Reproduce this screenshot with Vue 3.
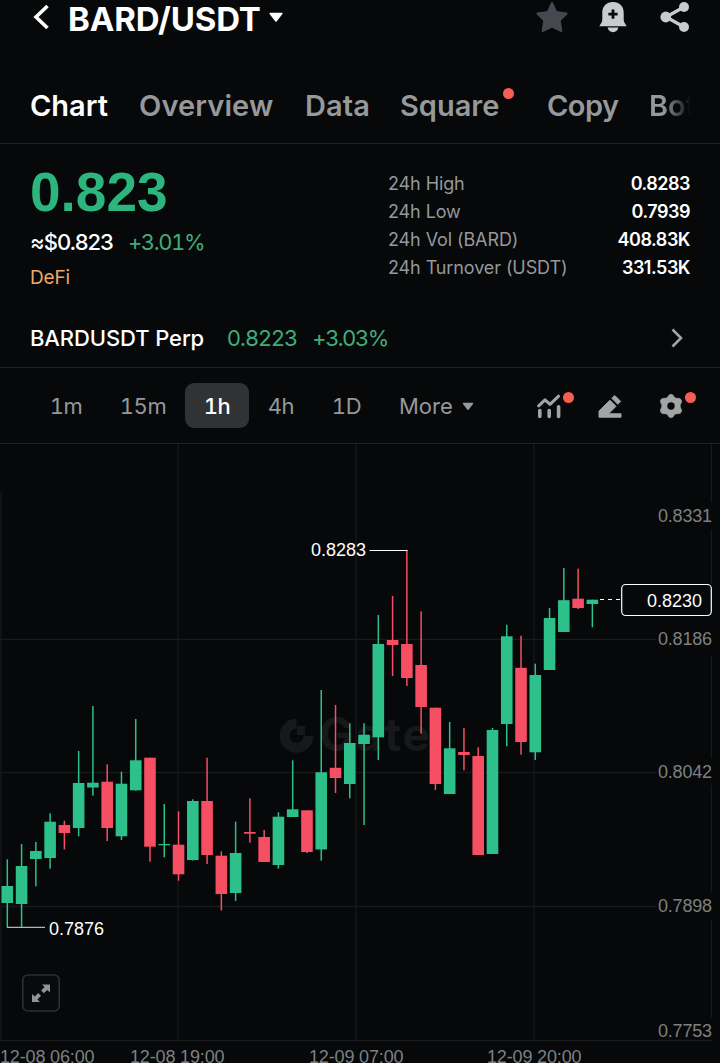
<template>
  <div class="market-page">
    <!-- header -->
    <header class="header">
      <svg class="back" width="18" height="28" viewBox="0 0 18 28">
        <path d="M15.5 3 L4 14 L15.5 25" fill="none" stroke="#fff" stroke-width="3.6" />
      </svg>
      <div class="pair">BARD/USDT</div>
      <svg class="pair-arrow" width="16" height="12" viewBox="0 0 16 12">
        <path d="M2.2 1.6 H13.8 L8 9 Z" fill="#fff" stroke="#fff" stroke-width="1.6" stroke-linejoin="round" />
      </svg>
      <div class="header-icons">
        <svg width="34" height="34" viewBox="0 0 34 34">
          <path
            d="M17 3 L21.3 12.1 L31.6 13.5 L24.7 20.5 L26.3 31 L17 26.6 L7.7 31 L9.3 20.5 L2.4 13.5 L12.7 12.1 Z"
            fill="#464850" stroke="#464850" stroke-width="2" stroke-linejoin="round"
          />
        </svg>
        <svg width="30" height="34" viewBox="0 0 30 34">
          <path
            d="M15 2 C21.6 2 25.7 6.4 25.7 12.4 V19.5 C25.7 22 27 23.4 28.7 26.2 H1.3 C3 23.4 4.3 22 4.3 19.5 V12.4 C4.3 6.4 8.4 2 15 2 Z"
            fill="#c9cccd"
          />
          <path d="M9.6 27.6 H20.4 C19.8 30.8 17.6 32.2 15 32.2 C12.4 32.2 10.2 30.8 9.6 27.6 Z" fill="#c9cccd" />
          <path d="M15 9.5 V18.7 M10.4 14.1 H19.6" stroke="#060809" stroke-width="2.8" />
        </svg>
        <svg width="30" height="34" viewBox="0 0 30 34">
          <path d="M24 7 L6 17 L24 27" fill="none" stroke="#c9cccd" stroke-width="3.2" />
          <circle cx="24" cy="7" r="5" fill="#c9cccd" />
          <circle cx="5.8" cy="17" r="5.4" fill="#c9cccd" />
          <circle cx="24" cy="27" r="5" fill="#c9cccd" />
        </svg>
      </div>
    </header>

    <!-- page tabs -->
    <div class="tabs-wrap">
      <nav class="tabs">
        <div
          v-for="tab in tabs"
          :key="tab.name"
          class="tab"
          :class="[tab.key, { active: activeTab === tab.key }]"
          @click="activeTab = tab.key"
        >
          {{ tab.name }}
          <i v-if="tab.dot" class="dot"></i>
        </div>
      </nav>
    </div>

    <!-- price summary -->
    <section class="summary">
      <div class="price-box">
        <div class="price">0.823</div>
        <div class="sub-price">
          <span class="fiat">≈$0.823</span>
          <span class="change">+3.01%</span>
        </div>
        <div class="tag">DeFi</div>
      </div>
      <div class="stats">
        <div v-for="item in stats" :key="item.label" class="stat">
          <span class="stat-label">{{ item.label }}</span>
          <span class="stat-value">{{ item.value }}</span>
        </div>
      </div>
    </section>

    <section class="perp">
      <span class="perp-name">BARDUSDT Perp</span>
      <span class="perp-price">0.8223</span>
      <span class="perp-change">+3.03%</span>
      <svg class="perp-arrow" width="14" height="20" viewBox="0 0 14 20">
        <path d="M2.5 1.5 L11 10 L2.5 18.5" fill="none" stroke="#a2a4a5" stroke-width="2.6" />
      </svg>
    </section>

    <!-- interval toolbar -->
    <section class="toolbar">
      <div class="intervals">
        <div
          v-for="item in intervals"
          :key="item"
          class="interval"
          :class="{ active: activeInterval === item }"
          @click="activeInterval = item"
        >
          {{ item }}
        </div>
      </div>
      <div class="more">
        More
        <svg width="12" height="9" viewBox="0 0 12 9">
          <path d="M1.5 1.5 H10.5 L6 7.2 Z" fill="#96989a" stroke="#96989a" stroke-width="1.4" stroke-linejoin="round" />
        </svg>
      </div>
      <div class="tools">
        <div class="tool">
          <svg width="26" height="26" viewBox="0 0 26 26">
            <path d="M2.6 12.8 L9 6.8 L14 11.4 L22.6 3.2" fill="none" stroke="#a2a4a6" stroke-width="3" stroke-linecap="round" stroke-linejoin="round" />
            <path d="M3.8 17.6 V23.4 M13.2 17.6 V23.4 M22.6 13.8 V23.4" stroke="#a2a4a6" stroke-width="3.6" stroke-linecap="round" />
          </svg>
          <i class="dot"></i>
        </div>
        <div class="tool">
          <svg width="26" height="26" viewBox="0 0 26 26">
            <path d="M12.9 7.2 L19 13.3 L11.6 20.8 H24 V24.2 H2 V18.1 Z" fill="#a2a4a6" stroke="#a2a4a6" stroke-width="1" stroke-linejoin="round" />
            <path d="M14.8 5.3 L17.8 2.5 L23.6 8.3 L20.8 11.3 Z" fill="#a2a4a6" stroke="#a2a4a6" stroke-width="1" stroke-linejoin="round" />
          </svg>
        </div>
        <div class="tool">
          <svg width="26" height="26" viewBox="0 0 26 26">
            <path
              d="M13 1.2 Q15.3 1.2 16.2 4 Q17.6 5.6 20 5.3 Q22.6 5 23.4 7.2 Q24.2 9.2 22.6 11 Q21.6 13 22.6 15 Q24.2 16.8 23.4 18.8 Q22.6 21 20 20.7 Q17.6 20.4 16.2 22 Q15.3 24.8 13 24.8 Q10.7 24.8 9.8 22 Q8.4 20.4 6 20.7 Q3.4 21 2.6 18.8 Q1.8 16.8 3.4 15 Q4.4 13 3.4 11 Q1.8 9.2 2.6 7.2 Q3.4 5 6 5.3 Q8.4 5.6 9.8 4 Q10.7 1.2 13 1.2 Z"
              fill="#a2a4a6" stroke="#a2a4a6" stroke-width="0.6"
            />
            <circle cx="13" cy="13" r="3.7" fill="#060809" />
          </svg>
          <i class="dot"></i>
        </div>
      </div>
    </section>

    <!-- candlestick chart -->
    <section class="chart">
      <svg width="720" height="619" viewBox="0 444 720 619">
        <g class="grid">
          <path v-for="x in [1, 178, 356, 534]" :key="'x' + x" :d="`M${x} ${x === 1 ? 492 : 444} V1040`" />
          <path v-for="y in [639.5, 772.5, 906.5]" :key="'y' + y" :d="`M0 ${y} H656`" />
          <path d="M0 1040.5 H712" />
          <path d="M711.5 444 V502 M711.5 530 V584 M711.5 656 V758 M711.5 785 V892 M711.5 920 V1018" />
        </g>

        <g class="watermark">
          <path d="M296.5 723.8 A12 12 0 1 0 308.5 736" fill="none" stroke="#16181a" stroke-width="10" />
          <path d="M297 726 H305 V735 H297 Z" fill="#16181a" />
          <text x="319" y="751" textLength="111">Gate</text>
        </g>

        <g v-for="(c, i) in candles" :key="i" :class="c[0]">
          <rect :x="centerX(i) - 0.75" :y="c[1]" width="1.5" :height="c[4] - c[1]" />
          <rect :x="centerX(i) - 5.8" :y="c[2]" width="11.6" :height="c[3] - c[2]" />
        </g>

        <!-- high / low marks -->
        <path d="M369.5 550.5 H407.5" stroke="#fff" stroke-width="1.2" />
        <text class="mark" x="311" y="556" textLength="55">0.8283</text>
        <path d="M7 927.3 H45" stroke="#b4b6b6" stroke-width="1.2" />
        <text class="mark" x="49" y="935" textLength="55">0.7876</text>

        <!-- last price -->
        <path d="M600 599.5 H621" stroke="#fff" stroke-width="1.2" stroke-dasharray="4 4" />
        <rect x="621.7" y="584.5" width="89.6" height="31" rx="4" fill="#060809" stroke="#fff" stroke-width="1.2" />
        <text class="mark" x="647" y="607" textLength="55">0.8230</text>

        <text
          v-for="p in priceLabels"
          :key="p.text"
          class="axis"
          x="658"
          :y="p.y"
          textLength="54"
        >{{ p.text }}</text>
        <text
          v-for="t in timeLabels"
          :key="t.text"
          class="axis"
          :x="t.x"
          y="1063"
          textLength="94.5"
        >{{ t.text }}</text>

        <g class="expand">
          <rect x="22.8" y="975" width="36.4" height="36" rx="5" fill="#080a0b" stroke="#2d2f30" stroke-width="1.6" />
          <path
            d="M42 984.5 H50 V992.5 L47.4 989.9 L43.8 993.2 L41.2 990.6 L44.6 987.1 Z M32 994 L34.7 996.5 L38.2 993 L41 995.8 L37.4 999.4 L40 1002 H32 Z"
            fill="#929495"
          />
        </g>
      </svg>
    </section>
  </div>
</template>

<script setup>
import { ref } from 'vue';

const activeTab = ref('chart');
const activeInterval = ref('1h');

const tabs = [
  { key: 'chart', name: 'Chart' },
  { key: 'overview', name: 'Overview' },
  { key: 'data', name: 'Data' },
  { key: 'square', name: 'Square', dot: true },
  { key: 'copy', name: 'Copy' },
  { key: 'bots', name: 'Bots' },
];

const stats = [
  { label: '24h High', value: '0.8283' },
  { label: '24h Low', value: '0.7939' },
  { label: '24h Vol (BARD)', value: '408.83K' },
  { label: '24h Turnover (USDT)', value: '331.53K' },
];

const intervals = ['1m', '15m', '1h', '4h', '1D'];

// direction, high, body top, body bottom, low
const candles = [
  ['up', 859.3, 886, 903, 927.3],
  ['up', 844, 866, 904, 927],
  ['up', 842, 851, 859, 886.3],
  ['up', 813.3, 821.7, 858, 868.7],
  ['down', 820.7, 825, 833, 849.5],
  ['up', 751, 783, 828, 836.3],
  ['up', 706, 782.7, 787.5, 795.7],
  ['down', 764.3, 781.7, 828, 841],
  ['up', 771.7, 783.7, 836.3, 840],
  ['up', 719, 760.3, 790.3, 790.8],
  ['down', 757.7, 757.7, 846.7, 861.7],
  ['up', 804, 844, 845.3, 857.3],
  ['down', 811.3, 844.7, 874.3, 880.7],
  ['up', 799.3, 801, 860, 860.5],
  ['down', 757.7, 801, 855, 864],
  ['down', 851.3, 855.7, 894, 910.5],
  ['up', 821.7, 853, 893, 901],
  ['down', 798.3, 832, 833.7, 842.7],
  ['down', 830, 837, 862, 862],
  ['up', 812.3, 816.7, 865, 868.7],
  ['up', 760.3, 809.3, 817, 817],
  ['down', 810.3, 810.3, 852, 853],
  ['up', 690, 772.3, 849.5, 860.7],
  ['down', 705, 767.8, 778, 793],
  ['up', 723.3, 743, 784, 798.3],
  ['up', 723.3, 734.7, 744, 825],
  ['up', 615, 644, 737.3, 760],
  ['down', 596, 640, 645, 676],
  ['down', 550, 644, 678, 686],
  ['down', 611.3, 665, 707, 733.7],
  ['down', 707.7, 707.7, 784, 790],
  ['up', 722, 748.3, 794, 794],
  ['down', 728, 752, 755, 770.3],
  ['down', 747.3, 756, 855, 855],
  ['up', 728, 730, 854, 854],
  ['up', 624.7, 636.3, 724, 746.3],
  ['down', 635.7, 667.8, 742, 754.7],
  ['up', 663.7, 675, 752.3, 760],
  ['up', 608, 618, 670, 670],
  ['up', 568, 600.2, 632, 632],
  ['down', 568.7, 598.7, 608, 609],
  ['up', 599.7, 599.7, 604, 627.3],
];

const centerX = (i) => 7.3 + i * 14.27;

const priceLabels = [
  { text: '0.8331', y: 522 },
  { text: '0.8186', y: 645 },
  { text: '0.8042', y: 778 },
  { text: '0.7898', y: 912 },
  { text: '0.7753', y: 1037 },
];

const timeLabels = [
  { text: '12-08 06:00', x: 0 },
  { text: '12-08 19:00', x: 130 },
  { text: '12-09 07:00', x: 309 },
  { text: '12-09 20:00', x: 487 },
];
</script>

<style>
body {
  background: #060809;
}
</style>

<style scoped>
.market-page {
  width: 720px;
  height: 1063px;
  overflow: hidden;
  background: #060809;
  color: #fff;
  font-family: Inter, "Liberation Sans", sans-serif;
  white-space: nowrap;
}

.header {
  display: flex;
  align-items: center;
  height: 36px;
  padding: 0 30px 0 32px;
}

.back {
  margin-top: -3px;
}

.pair {
  margin-left: 18px;
  margin-top: 1px;
  width: 192px;
  font-size: 33px;
  font-weight: 700;
  letter-spacing: -0.15px;
}

.pair-arrow {
  margin-left: 8px;
}

.header-icons {
  display: flex;
  gap: 30px;
  margin-left: auto;
  margin-top: -2px;
}

.header-icons svg:first-child {
  margin-right: -1px;
}

.header-icons svg:nth-child(2) {
  margin-right: 2px;
}

.tabs-wrap {
  height: 72px;
  margin-top: 35px;
  border-bottom: 1px solid #202223;
}

.tabs {
  display: flex;
  width: 690px;
  height: 72px;
  padding-left: 30px;
  box-sizing: border-box;
  overflow: hidden;
  font-size: 29px;
  font-weight: 600;
  line-height: 70px;
  color: #96989a;
}

.tab {
  position: relative;
  flex: none;
}

.tab.chart { width: 109px; }
.tab.overview { width: 166px; letter-spacing: 0.1px; }
.tab.data { width: 95px; letter-spacing: 0.1px; }
.tab.square { width: 147px; }
.tab.copy { width: 102px; letter-spacing: -0.5px; }

.tab.bots {
  background: linear-gradient(90deg, #96989a 14px, #060809 42px);
  background-clip: text;
  color: transparent;
}

.tab.active {
  color: #fff;
}

.tab.active::after {
  content: "";
  position: absolute;
  left: 23px;
  bottom: 0;
  width: 31px;
  height: 6px;
  border-radius: 2px;
  background: #fff;
}

.dot {
  position: absolute;
  width: 11px;
  height: 11px;
  border-radius: 50%;
  background: #f55f52;
}

.tab .dot {
  left: 103px;
  top: 17px;
}

.summary {
  display: flex;
  justify-content: space-between;
  height: 166px;
  padding: 19px 30px 0;
  box-sizing: border-box;
}

.price {
  height: 58px;
  font-family: "Liberation Sans", sans-serif;
  font-size: 55px;
  font-weight: 700;
  line-height: 58px;
  color: #2db57e;
}

.sub-price {
  display: flex;
  height: 43px;
  font-size: 22px;
  line-height: 43px;
}

.fiat {
  width: 98px;
  font-weight: 500;
  letter-spacing: -1px;
}

.change,
.perp-price,
.perp-change {
  color: #3ead7c;
}

.change {
  font-feature-settings: "tnum";
  letter-spacing: -1.4px;
}

.tag {
  font-size: 19px;
  line-height: 27px;
  letter-spacing: -0.2px;
  color: #f0a868;
}

.stats {
  width: 302px;
  padding-top: 7px;
}

.stat {
  display: flex;
  justify-content: space-between;
  font-size: 18px;
  line-height: 28px;
}

.stat-label {
  color: #96989a;
  letter-spacing: -0.1px;
}

.stat-value {
  font-weight: 600;
  letter-spacing: -0.5px;
}

.perp {
  display: flex;
  align-items: center;
  height: 57px;
  padding: 0 36px 0 30px;
  border-bottom: 1px solid #202223;
  font-size: 22px;
}

.perp span {
  margin-top: -2px;
}

.perp-name {
  width: 197px;
  font-weight: 500;
  letter-spacing: -0.1px;
}

.perp-price {
  width: 85px;
  letter-spacing: -0.5px;
}

.perp-change {
  letter-spacing: -1px;
}

.perp-arrow {
  margin-left: auto;
  margin-top: -2px;
}

.toolbar {
  display: flex;
  align-items: center;
  height: 75px;
  border-bottom: 1px solid #202223;
  font-size: 22px;
  color: #96989a;
}

.intervals {
  display: flex;
  margin-left: 33px;
}

.interval {
  width: 66px;
  height: 45px;
  line-height: 47px;
  text-align: center;
  font-feature-settings: "tnum";
  letter-spacing: -0.4px;
}

.interval:nth-child(2) {
  width: 86px;
  text-indent: 2px;
}

.interval.active {
  width: 64px;
  border-radius: 9px;
  background: #303234;
  color: #fff;
  font-weight: 500;
}

.interval:nth-child(4) {
  width: 64px;
}

.interval:nth-child(5) {
  text-indent: 1px;
}

.more {
  display: flex;
  align-items: center;
  gap: 9px;
  margin-left: 20px;
  padding-top: 1px;
}

.tools {
  display: flex;
  gap: 35px;
  margin-left: auto;
  margin-right: 36px;
}

.tool {
  position: relative;
  height: 26px;
}

.tool .dot {
  left: 27px;
  top: -1px;
}

.chart {
  height: 619px;
}

.chart svg {
  display: block;
}

.grid path {
  fill: none;
  stroke: #181a1b;
  stroke-width: 1.3;
}

.up rect {
  fill: #2dc08a;
}

.down rect {
  fill: #f64e62;
}

.mark {
  fill: #fff;
  font-family: "Liberation Sans", sans-serif;
  font-size: 18px;
}

.axis {
  fill: #7e8081;
  font-family: "Liberation Sans", sans-serif;
  font-size: 18px;
}

.watermark text {
  fill: #16181a;
  font-size: 46px;
  font-weight: 700;
}
</style>
